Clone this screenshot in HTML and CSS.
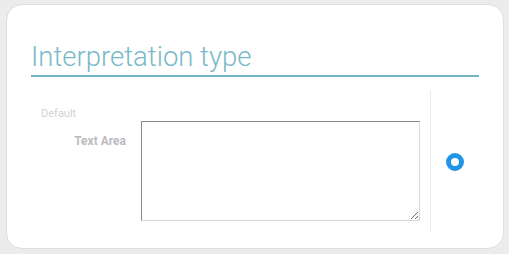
FILE: index.html
```html
<!DOCTYPE html>
<html>
<head>
<meta charset="utf-8">
<link rel="stylesheet" href="styles.css">
</head>
<body>
<div class="card">
  <h1 class="title">Interpretation type</h1>
  <div class="content">
    <div class="main">
      <div class="default">Default</div>
      <div class="field">
        <label class="label">Text Area</label>
        <textarea class="area"></textarea>
      </div>
    </div>
    <div class="side">
      <span class="radio"></span>
    </div>
  </div>
</div>
</body>
</html>
```
FILE: styles.css
```css
html, body {
  margin: 0;
  padding: 0;
  background: #ececec;
  width: 509px;
  height: 254px;
  overflow: hidden;
  font-family: Roboto, "Liberation Sans", sans-serif;
}
.card {
  box-sizing: border-box;
  margin: 4px 0 0 6px;
  width: 498px;
  height: 245px;
  background: #fff;
  border: 1px solid #dedede;
  border-radius: 16px;
  padding: 34px 24px 0 24px;
}
.title {
  margin: 0;
  font-weight: 300;
  font-size: 27.5px;
  line-height: 36px;
  color: #7ab9c9;
  border-bottom: 2px solid #72b4c4;
  height: 38px;
  box-sizing: border-box;
}
.content {
  display: flex;
  margin-top: 13px;
  height: 143px;
}
.main {
  flex: 0 0 399px;
  padding-left: 10px;
  box-sizing: border-box;
}
.default {
  font-size: 11px;
  color: #d2d2d2;
  margin-top: 17px;
  line-height: 13px;
}
.field {
  display: flex;
  margin-top: 1px;
}
.label {
  width: 85px;
  text-align: right;
  font-weight: 700;
  font-size: 12px;
  color: #bbbbbf;
  padding-top: 13px;
  line-height: 14px;
  margin-right: 15px;
}
.area {
  box-sizing: border-box;
  width: 279px;
  height: 100px;
  margin: 0;
  border: 1px solid;
  border-color: #8a8a8a #d8d8d8 #d8d8d8 #8a8a8a;
  background: #fff;
  resize: both;
}
.side {
  flex: 1;
  border-left: 1px solid #ebebeb;
  display: flex;
  align-items: center;
  justify-content: center;
}
.radio {
  box-sizing: border-box;
  display: block;
  width: 18px;
  height: 18px;
  border-radius: 50%;
  border: 5px solid #2196e6;
  background: #fff;
  margin-top: 0;
}
```
